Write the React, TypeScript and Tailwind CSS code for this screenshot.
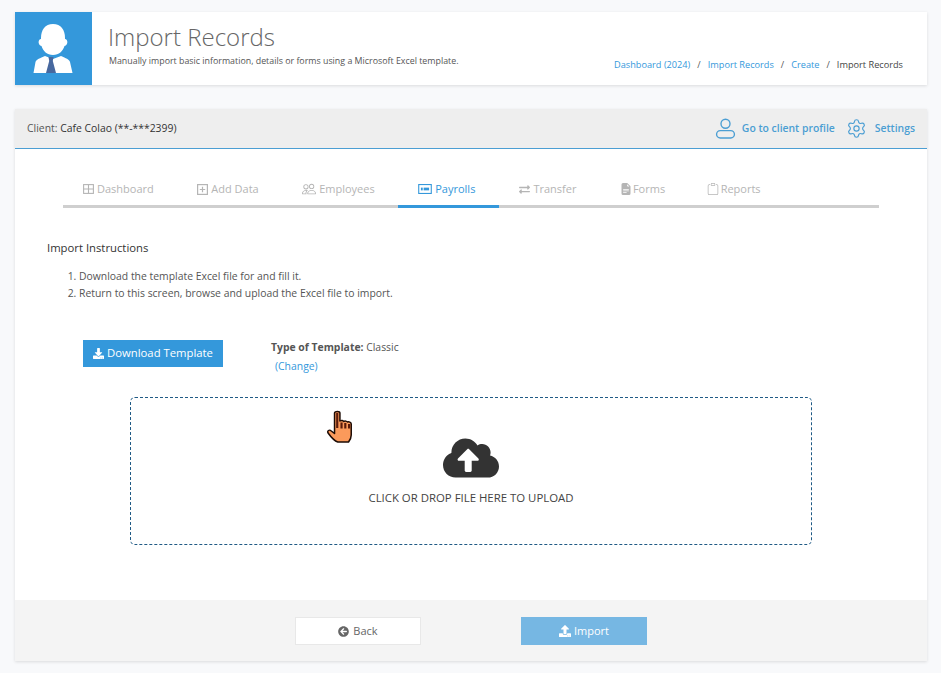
import React from 'react';
import { Settings } from 'lucide-react';
import { BsPeople, BsClipboard, BsFileEarmarkTextFill } from 'react-icons/bs';
import { FaDownload, FaUpload, FaArrowCircleLeft, FaExchangeAlt, FaCloudUploadAlt } from 'react-icons/fa';

function AvatarIcon() {
  return (
    <svg viewBox="0 0 77 73" className="w-[77px] h-[73px]">
      <path d="M38 12C30 12 26 18 26 26v1c-3 0-3.500 6 .500 7C28 39 32 43 38 43c6 0 10-4 11.500-9 4-1 3.500-7 .500-7v-1C50 18 46 12 38 12z" fill="#fff" />
      <path d="M30 44c-5 2.500-8.500 3-9.500 6L18.500 61h39L55 50c-1-3-4-3.500-9-6l-8 3z" fill="#fff" />
      <path d="M33.500 45h5l-.7 4 3.200 12H31l3.200-12z" fill="#47689f" />
    </svg>
  );
}

function UserOutline() {
  return (
    <svg viewBox="0 0 20 20" fill="none" stroke="#4b9ed3" strokeWidth="1.300" className="w-[21px] h-[21px]">
      <circle cx="10" cy="5.500" r="4.300" />
      <rect x="1.500" y="12" width="17" height="7" rx="3.500" />
    </svg>
  );
}

function GridIcon() {
  return (
    <svg viewBox="0 0 11 10" className="w-[11px] h-[10px]" fill="none" stroke="currentColor" strokeWidth="1.100">
      <rect x="0.600" y="0.600" width="9.800" height="8.800" />
      <path d="M0.600 5h9.800M5.500 0.600v8.800" />
    </svg>
  );
}

function PlusBoxIcon() {
  return (
    <svg viewBox="0 0 11 11" className="w-[11px] h-[11px]" fill="none" stroke="currentColor" strokeWidth="1.200">
      <rect x="0.600" y="0.600" width="9.800" height="9.800" />
      <path d="M5.500 2.800v5.400M2.800 5.500h5.400" />
    </svg>
  );
}

function PayrollIcon() {
  return (
    <svg viewBox="0 0 15 11" className="w-[14px] h-[10px]" fill="none">
      <rect x="0.600" y="0.600" width="13.800" height="9.800" stroke="currentColor" strokeWidth="1.200" />
      <rect x="3" y="4" width="2" height="3" fill="currentColor" />
      <rect x="6" y="4" width="6" height="3" fill="currentColor" />
    </svg>
  );
}

function HandCursor() {
  return (
    <svg viewBox="0 0 26 34" preserveAspectRatio="none" className="w-[28px] h-[34px] absolute left-[327px] top-[410px]">
      <path
        d="M7 3c0-2 5-2 5 0v8c1.500-1 3-.5 3.500.5 1-.8 3-.5 3.500.5 1.200-.5 3.500 0 3.500 2V25c0 3-1 5-2.500 7H10c-3-1-7-6-9-9-1-2 1-4 3-2l3 2.500z"
        fill="#fb9a5b"
        stroke="#1c0b05"
        strokeWidth="1.400"
        strokeLinejoin="round"
      />
      <path d="M8.500 3h2v15h-2zM12.500 12.500h2v6h-2zM16 13h2v5.500h-2zM19.500 14h2v4.500h-2z" fill="#5a1a0a" />
    </svg>
  );
}

const tabs = [
  { label: 'Dashboard', icon: <GridIcon /> },
  { label: 'Add Data', icon: <PlusBoxIcon /> },
  { label: 'Employees', icon: <BsPeople className="text-[14px]" /> },
  { label: 'Payrolls', icon: <PayrollIcon />, active: true },
  { label: 'Transfer', icon: <FaExchangeAlt className="text-[11px]" /> },
  { label: 'Forms', icon: <BsFileEarmarkTextFill className="text-[12px] -mr-[2px]" /> },
  { label: 'Reports', icon: <BsClipboard className="text-[12px] -ml-[2px] -mr-[1px]" /> },
];

export default function App() {
  return (
    <div className="relative w-[941px] h-[673px] overflow-hidden bg-[#f8f9fb] font-['Open_Sans',sans-serif] text-[#333] pl-[15px] pr-[14px] pt-[12px]">
      {/* page header */}
      <div className="flex h-[73px] w-[912px] bg-white shadow-[0_1px_3px_rgba(0,0,0,0.12)]">
        <div className="w-[77px] h-[73px] bg-[#3498db] shrink-0">
          <AvatarIcon />
        </div>
        <div className="pl-[16px] pt-[8px] w-[430px]">
          <h1 className="text-[24px] leading-[33px] font-light text-[#666]">Import Records</h1>
          <p className="text-[8.850px] leading-[13px] mt-[2px] ml-[1px] text-[#555]">
            Manually import basic information, details or forms using a Microsoft Excel template.
          </p>
        </div>
        <div className="ml-auto flex items-end pb-[14px] pr-[24px] text-[9.200px] leading-[13px]">
          <span className="text-[#3498db]">Dashboard (2024)</span>
          <span className="mx-[7px] text-[#555]">/</span>
          <span className="text-[#3498db]">Import Records</span>
          <span className="mx-[7px] text-[#555]">/</span>
          <span className="text-[#3498db]">Create</span>
          <span className="mx-[7px] text-[#555]">/</span>
          <span className="text-[#444]">Import Records</span>
        </div>
      </div>

      {/* main panel */}
      <div className="mt-[24px] w-[912px] h-[552px] bg-white shadow-[0_1px_3px_rgba(0,0,0,0.12)] flex flex-col">
        <div className="h-[40px] bg-[#eeeeee] border-b border-[#4b9ed3] flex items-center pl-[12px] pr-[12px] shrink-0">
          <span className="text-[10.400px] text-[#555]">
            Client: <span className="text-[#333]">Cafe Colao (**-***2399)</span>
          </span>
          <div className="ml-auto flex items-center text-[#4b9ed3] text-[10.400px] font-semibold">
            <UserOutline />
            <span className="ml-[6px]">Go to client profile</span>
            <Settings className="w-[21px] h-[21px] ml-[11px]" strokeWidth={1.300} />
            <span className="ml-[8px]">Settings</span>
          </div>
        </div>

        <div className="flex-1 px-[32px]">
          {/* tabs */}
          <div className="mt-[21px] ml-[16px] w-[816px] flex gap-[3.500px] border-b-[3px] border-[#cfcfcf] h-[38px]">
            {tabs.map((t) => (
              <div
                key={t.label}
                className={
                  t.active
                    ? 'flex items-center gap-[3px] pl-[20px] pr-[24px] -mr-[3.500px] h-[38px] pt-[3px] border-b-[3px] border-[#3498db] text-[#3498db] text-[11px]'
                    : 'flex items-center gap-[3px] px-[20px] h-[38px] pt-[3px] border-b-[3px] border-transparent text-[#b5b5b5] text-[11px]'
                }
              >
                {t.icon}
                <span>{t.label}</span>
              </div>
            ))}
          </div>

          {/* instructions */}
          <div className="mt-[32px] text-[11.300px] leading-[15px] font-medium text-[#333]">Import Instructions</div>
          <ol className="mt-[13px] ml-[20px] text-[10.400px] leading-[17px] text-[#555] list-decimal pl-[12px]">
            <li>Download the template Excel file for and fill it.</li>
            <li>Return to this screen, browse and upload the Excel file to import.</li>
          </ol>

          {/* template row */}
          <div className="mt-[38px] ml-[36px] flex">
            <div className="w-[140px] h-[27px] bg-[#3498db] text-white text-[11.300px] flex items-center justify-center gap-[3px]">
              <FaDownload className="text-[11px]" />
              <span>Download Template</span>
            </div>
            <div className="ml-[48px] text-[10.400px] text-[#555]">
              <div className="leading-[15px]">
                <span className="font-bold">Type of Template:</span> Classic
              </div>
              <div className="mt-[4px] ml-[4px] leading-[15px] text-[#3498db]">(Change)</div>
            </div>
          </div>

          {/* drop zone */}
          <div className="mt-[23px] mx-auto w-[682px] h-[148px] border border-dashed border-[#1f5a85] rounded-[5px] flex flex-col items-center pt-[37px]">
            <FaCloudUploadAlt className="text-[#333] text-[56px] h-[46px]" />
            <div className="mt-[10px] text-[11.400px] leading-[14px] text-[#444]">CLICK OR DROP FILE HERE TO UPLOAD</div>
          </div>
        </div>

        {/* footer */}
        <div className="h-[61px] bg-[#f4f4f4] shrink-0 flex items-center justify-center gap-[100px]">
          <div className="w-[126px] h-[28px] pt-[1px] bg-white border border-[#e8e8e8] text-[#666] text-[11px] flex items-center justify-center gap-[4px]">
            <FaArrowCircleLeft className="text-[11px]" />
            <span>Back</span>
          </div>
          <div className="w-[126px] h-[28px] pt-[1px] bg-[#76b7e3] text-white text-[11px] font-medium flex items-center justify-center gap-[3px]">
            <FaUpload className="text-[12px]" />
            <span>Import</span>
          </div>
        </div>
      </div>

      <HandCursor />
    </div>
  );
}
